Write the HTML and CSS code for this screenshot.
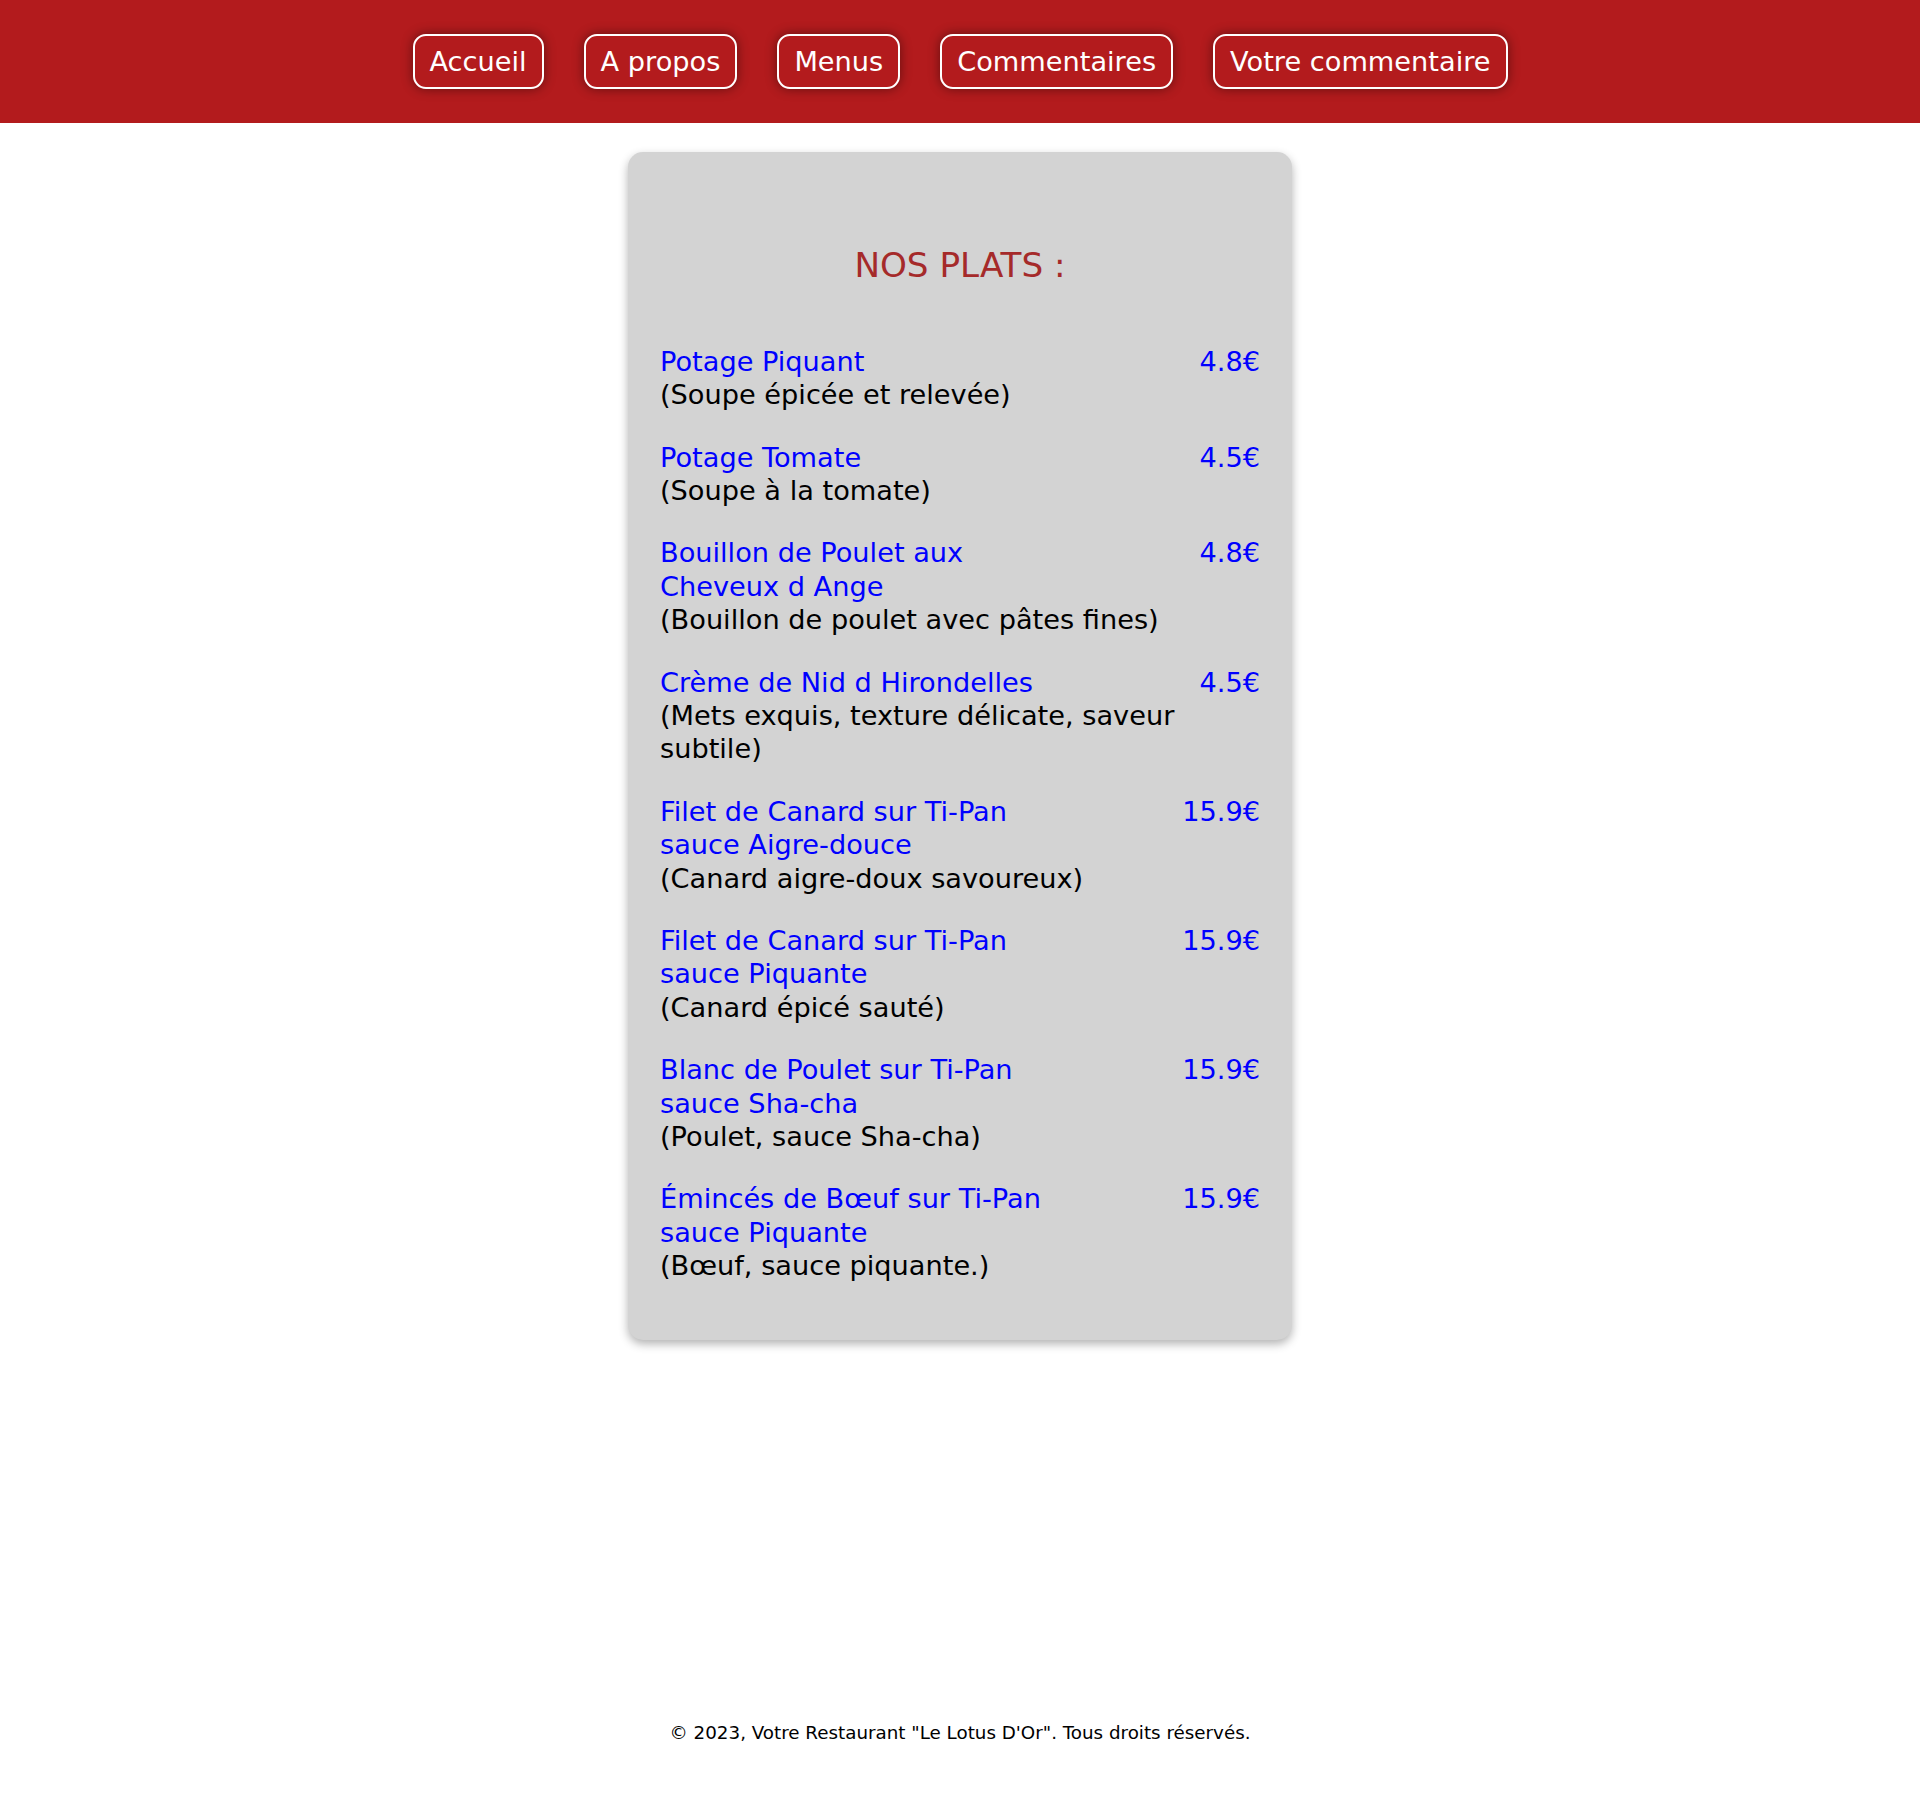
FILE: index.html
```html
<!DOCTYPE html>
<html lang="fr">
<head>
<meta charset="utf-8">
<title>Le Lotus D'Or - Menus</title>
<link rel="stylesheet" href="styles.css">
</head>
<body>
<header class="topbar">
  <nav class="nav">
    <a class="nav-btn" href="#">Accueil</a>
    <a class="nav-btn" href="#">A propos</a>
    <a class="nav-btn" href="#">Menus</a>
    <a class="nav-btn" href="#">Commentaires</a>
    <a class="nav-btn" href="#">Votre commentaire</a>
  </nav>
</header>
<main class="main">
  <section class="card">
    <h2 class="card-title">NOS PLATS :</h2>
    <ul class="dishes">
      <li class="dish">
        <div class="dish-head"><span class="dish-name">Potage Piquant</span><span class="dish-price">4.8€</span></div>
        <div class="dish-desc">(Soupe épicée et relevée)</div>
      </li>
      <li class="dish">
        <div class="dish-head"><span class="dish-name">Potage Tomate</span><span class="dish-price">4.5€</span></div>
        <div class="dish-desc">(Soupe à la tomate)</div>
      </li>
      <li class="dish">
        <div class="dish-head"><span class="dish-name">Bouillon de Poulet aux Cheveux d Ange</span><span class="dish-price">4.8€</span></div>
        <div class="dish-desc">(Bouillon de poulet avec pâtes fines)</div>
      </li>
      <li class="dish">
        <div class="dish-head"><span class="dish-name">Crème de Nid d Hirondelles</span><span class="dish-price">4.5€</span></div>
        <div class="dish-desc">(Mets exquis, texture délicate, saveur subtile)</div>
      </li>
      <li class="dish">
        <div class="dish-head"><span class="dish-name">Filet de Canard sur Ti-Pan sauce Aigre-douce</span><span class="dish-price">15.9€</span></div>
        <div class="dish-desc">(Canard aigre-doux savoureux)</div>
      </li>
      <li class="dish">
        <div class="dish-head"><span class="dish-name">Filet de Canard sur Ti-Pan sauce Piquante</span><span class="dish-price">15.9€</span></div>
        <div class="dish-desc">(Canard épicé sauté)</div>
      </li>
      <li class="dish">
        <div class="dish-head"><span class="dish-name">Blanc de Poulet sur Ti-Pan sauce Sha-cha</span><span class="dish-price">15.9€</span></div>
        <div class="dish-desc">(Poulet, sauce Sha-cha)</div>
      </li>
      <li class="dish">
        <div class="dish-head"><span class="dish-name">Émincés de Bœuf sur Ti-Pan sauce Piquante</span><span class="dish-price">15.9€</span></div>
        <div class="dish-desc">(Bœuf, sauce piquante.)</div>
      </li>
    </ul>
  </section>
</main>
<footer class="footer">
  <p class="footer-text">© 2023, Votre Restaurant "Le Lotus D'Or". Tous droits réservés.</p>
</footer>
</body>
</html>
```

FILE: styles.css
```css
html, body {
  margin: 0;
  padding: 0;
}

body {
  font-family: "DejaVu Sans", Verdana, sans-serif;
  font-size: 27.2px;
  line-height: 1.25;
  background: #ffffff;
  color: #000000;
  min-height: 100vh;
  display: flex;
  flex-direction: column;
}

.topbar {
  background: #b31b1d;
  height: 123px;
  display: flex;
  align-items: center;
  justify-content: center;
}

.nav {
  display: flex;
  gap: 40px;
}

.nav-btn {
  display: block;
  font-size: 27.2px;
  line-height: 33.4px;
  color: #ffffff;
  text-decoration: none;
  border: 2px solid #ffffff;
  border-radius: 13px;
  padding: 9px 15px 8px;
  box-shadow: 0 0 12px rgba(0, 0, 0, 0.45);
}

.main {
  display: flex;
  justify-content: center;
  padding-top: 29px;
}

.card {
  width: 600px;
  background: #d3d3d3;
  border-radius: 15px;
  padding: 93px 32px 28.5px 32px;
  box-shadow: 0 4px 10px rgba(0, 0, 0, 0.3);
}

.card-title {
  margin: 0 0 58px;
  text-align: center;
  font-weight: normal;
  font-size: 34.2px;
  line-height: 41.75px;
  color: #a52a2a;
}

.dishes {
  list-style: none;
  margin: 0;
  padding: 0;
  font-size: 27.2px;
  line-height: 33.4px;
}

.dish {
  margin-bottom: 29px;
}

.dish-head {
  display: flex;
  justify-content: space-between;
  align-items: flex-start;
}

.dish-name {
  color: #0000ff;
  max-width: 405px;
}

.dish-price {
  color: #0000ff;
}

.dish-desc {
  color: #000000;
}

.footer {
  margin-top: auto;
  padding: 20px 0 56px;
  text-align: center;
}

.footer-text {
  margin: 0;
  font-size: 18.3px;
  line-height: 22.5px;
}
```
